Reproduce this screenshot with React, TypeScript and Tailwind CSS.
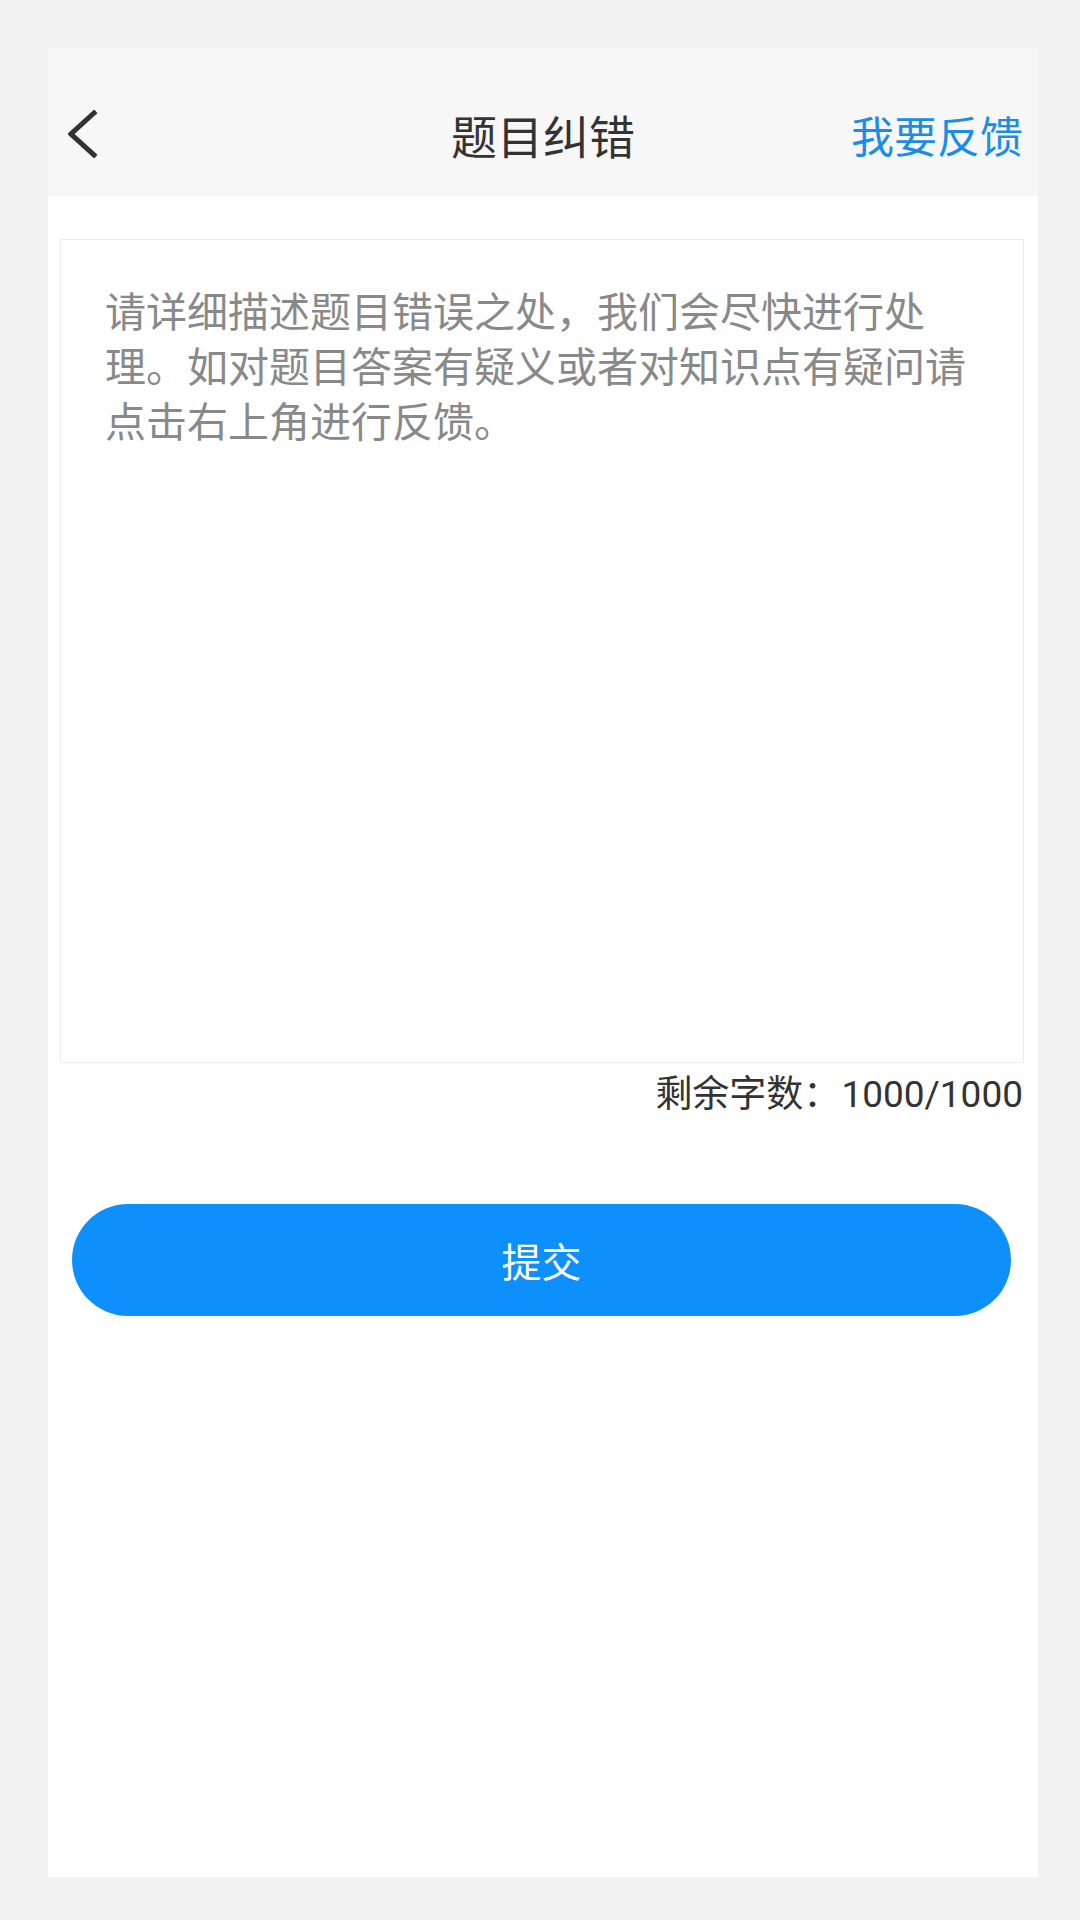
import React from "react";

const font = { fontFamily: '"Noto Sans CJK SC", "Noto Sans", sans-serif' };

export default function App() {
  return (
    <div className="min-h-[1920px] w-[1080px] bg-[#f2f2f2] pl-[48px] pr-[42px] pt-[48px] pb-[43px]" style={font}>
      <div className="flex h-[1829px] flex-col bg-white">
        {/* Header */}
        <div className="grid h-[148px] shrink-0 grid-cols-[1fr_auto_1fr] items-center bg-[#f7f7f7] pt-[24px]">
          <div className="flex items-center pl-[20px]">
            <svg width="30" height="48" viewBox="0 0 30 48" fill="none">
              <path d="M26 3 L3 24 L26 45" stroke="#333333" strokeWidth="5" strokeLinecap="square" strokeLinejoin="miter" />
            </svg>
          </div>
          <h1 className="text-[46px] leading-[56px] text-[#333333]">题目纠错</h1>
          <div className="flex justify-end pr-[15px]">
            <span className="text-[43px] leading-[56px] text-[#1a8de6]">我要反馈</span>
          </div>
        </div>

        {/* Text box */}
        <div className="mt-[43px] ml-[12px] mr-[14px] h-[824px] border border-[#ececec] px-[44px] pt-[42px]">
          <div className="text-[41px] leading-[55px] text-[#898989]">
            <div>请详细描述题目错误之处，我们会尽快进行处</div>
            <div>理。如对题目答案有疑义或者对知识点有疑问请</div>
            <div>点击右上角进行反馈。</div>
          </div>
        </div>

        {/* Counter */}
        <div className="mt-[5px] flex items-baseline justify-end pr-[15px] text-[37px] leading-[46px] text-[#333333]">
          <span className="w-[186px]">剩余字数：</span>
          <span className="text-[37px]" style={{ fontFamily: 'Roboto, "Noto Sans", sans-serif' }}>1000/1000</span>
        </div>

        {/* Submit */}
        <div className="mt-[86px] pl-[24px] pr-[27px]">
          <button
            type="button"
            className="flex h-[112px] w-full items-center justify-center rounded-full bg-[#0d8ffc] text-[40px] text-white"
          >
            提交
          </button>
        </div>
      </div>
    </div>
  );
}
